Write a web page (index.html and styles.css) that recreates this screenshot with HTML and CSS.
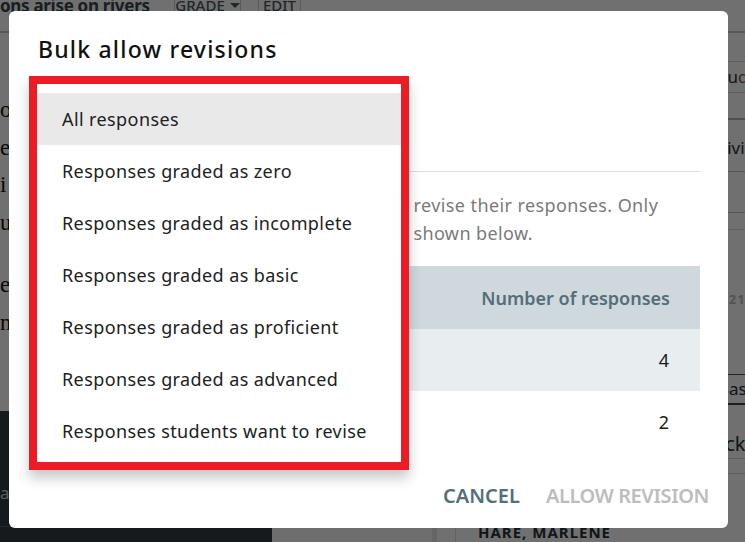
FILE: index.html
```html
<!DOCTYPE html>
<html>
<head>
<meta charset="utf-8">
<link rel="stylesheet" href="styles.css">
</head>
<body>
<div class="page">
  <header class="topbar">
    <div class="doc-title">ons arise on rivers</div>
    <div class="tb-btn grade">GRADE <span class="caret"></span></div>
    <div class="tb-btn edit">EDIT</div>
  </header>
  <div class="main">
    <section class="left">
      <div class="left-text">
        <div class="ln">o</div>
        <div class="ln">e</div>
        <div class="ln">i</div>
        <div class="ln">ur</div>
        <div class="ln gap">er</div>
        <div class="ln">nt</div>
      </div>
      <div class="left-dark">
        <div class="dark-text">as</div>
        <div class="dark-foot"></div>
      </div>
    </section>
    <section class="middle"></section>
    <section class="right">
      <div class="r-row r1"></div>
      <div class="r-row r2"><span class="r-txt">Stu<span class="acc">dents</span></span></div>
      <div class="r-row r3"></div>
      <div class="r-row r4"><span class="r-txt">Activity</span><div class="r-box"></div></div>
      <div class="r-row r5"><span class="r-num">5/21</span></div>
      <div class="r-row r6"><span class="r-txt">Basic</span></div>
      <div class="r-row r7"><span class="r-txt">Back</span></div>
      <div class="r-row r8"></div>
      <div class="r-row r9"><span class="student">HARE, MARLENE</span></div>
    </section>
  </div>
  <div class="overlay"></div>

  <div class="modal">
    <h2 class="modal-title">Bulk allow revisions</h2>
    <div class="field"></div>
    <p class="desc">
      <span class="line">Mark the responses you want students to&nbsp; revise their responses. Only</span>
      <span class="line">graded responses that may be revised are shown below.</span>
    </p>
    <table class="tbl">
      <thead>
        <tr><th class="c1">Response type</th><th class="c2">Number of responses</th></tr>
      </thead>
      <tbody>
        <tr class="alt"><td class="c1">All responses</td><td class="c2">4</td></tr>
        <tr><td class="c1">Responses graded as zero</td><td class="c2">2</td></tr>
      </tbody>
    </table>
    <div class="footer">
      <button class="btn cancel">CANCEL</button>
      <button class="btn allow">ALLOW REVISION</button>
    </div>

    <ul class="menu">
      <li class="item active">All responses</li>
      <li class="item">Responses graded as zero</li>
      <li class="item">Responses graded as incomplete</li>
      <li class="item">Responses graded as basic</li>
      <li class="item">Responses graded as proficient</li>
      <li class="item">Responses graded as advanced</li>
      <li class="item">Responses students want to revise</li>
    </ul>
  </div>
</div>
</body>
</html>
```

FILE: styles.css
```css
* { box-sizing: border-box; }
html, body { margin: 0; padding: 0; }
body { font-family: "Noto Sans", "Liberation Sans", sans-serif; background: #fff; }

.page {
  position: relative;
  width: 745px;
  height: 542px;
  overflow: hidden;
  background: #fff;
}

/* ---------- background page ---------- */
.topbar {
  display: flex;
  align-items: stretch;
  height: 54px;
  margin-top: -21px;
  border-bottom: 2px solid #c9c9c9;
}
.doc-title {
  width: 174px;
  flex-shrink: 0;
  overflow: hidden;
  display: flex;
  align-items: center;
  font-size: 17px;
  font-weight: 700;
  letter-spacing: -0.3px;
  color: #37474f;
  white-space: nowrap;
}
.tb-btn {
  flex-shrink: 0;
  display: flex;
  align-items: center;
  justify-content: center;
  gap: 5px;
  border-left: 1px solid #cfcfcf;
  border-right: 1px solid #cfcfcf;
  font-size: 15px;
  font-weight: 500;
  color: #455a64;
}
.grade { width: 67px; }
.edit { width: 43px; margin-left: 17px; }
.caret {
  width: 0; height: 0;
  border-left: 5px solid transparent;
  border-right: 5px solid transparent;
  border-top: 5px solid #455a64;
}

.main {
  display: flex;
  height: 509px;
}
.left {
  width: 272px;
  flex-shrink: 0;
  display: flex;
  flex-direction: column;
}
.left-text {
  flex: 1;
  padding-top: 58px;
  font-family: "Liberation Serif", serif;
  font-size: 23px;
  color: #111;
}
.ln { height: 37.5px; line-height: 37.5px; }
.ln.gap { margin-top: 25px; }
.left-dark {
  height: 131px;
  background: #313d44;
  display: flex;
  flex-direction: column;
}
.dark-text {
  flex: 1;
  padding-top: 70px;
  font-size: 17px;
  color: #cfd3d5;
}
.dark-foot { height: 16px; border-top: 1px solid #4d5a62; }

.middle {
  width: 165px;
  flex-shrink: 0;
  background: #fafafa;
  border-right: 5px solid #e6e6e6;
}
.right {
  flex: 1;
  min-width: 0;
  overflow: hidden;
  margin-left: 18px;
  border-left: 1px solid #e0e0e0;
  display: flex;
  flex-direction: column;
}
.r-row { display: flex; align-items: center; }
.r-txt { padding-left: 256px; font-size: 17px; color: #263238; white-space: nowrap; }
.acc { color: #8a5a1c; }
.r1 { height: 29px; border-bottom: 1px solid #d4d4d4; }
.r2 { height: 31px; border-bottom: 1px solid #d4d4d4; }
.r3 { height: 28px; border-bottom: 2px solid #b5b5b5; }
.r4 { height: 110px; flex-direction: column; align-items: flex-start; padding-top: 16px; border-bottom: 1px solid #dcdcdc; }
.r4 .r-txt { padding-left: 246px; }
.r-box { margin-left: 268px; margin-top: 12px; width: 30px; height: 42px; border: 1px solid #c4c4c4; }
.r5 { height: 146px; align-items: flex-start; padding-top: 60px; border-bottom: 1px solid #555; }
.r-num { padding-left: 258px; font-size: 13px; font-weight: 700; color: #bdbdbd; letter-spacing: 1px; white-space: nowrap; }
.r6 { height: 30px; border-bottom: 2px solid #444; }
.r6 .r-txt { padding-left: 262px; }
.r7 { height: 55px; align-items: flex-end; padding-bottom: 1px; border-bottom: 1px solid #d4d4d4; }
.r7 .r-txt { padding-left: 245px; font-size: 20px; }
.r8 { height: 15px; border-bottom: 1px solid #d4d4d4; }
.r9 { flex: 1; align-items: flex-start; padding-top: 48px; }
.student {
  padding-left: 22px;
  font-size: 15px;
  font-weight: 700;
  letter-spacing: 1px;
  color: #263238;
  white-space: nowrap;
}

.overlay {
  position: absolute;
  inset: 0;
  background: rgba(0, 0, 0, 0.56);
}

/* ---------- modal ---------- */
.modal {
  position: absolute;
  left: 9px;
  top: 11px;
  width: 719px;
  height: 517px;
  background: #fff;
  border-radius: 6px;
  padding: 24px 28px 0 29px;
  display: flex;
  flex-direction: column;
}
.modal-title {
  margin: 0;
  height: 28px;
  line-height: 28px;
  font-size: 23px;
  font-weight: 500;
  letter-spacing: 1.2px;
  color: #111;
}
.field {
  height: 109px;
  border-bottom: 1px solid #dedede;
}
.desc {
  margin: 19px 0 0;
  font-size: 18px;
  letter-spacing: 0.4px;
  line-height: 28px;
  color: #7a7a7a;
}
.desc .line { display: block; white-space: nowrap; }
.tbl {
  margin-top: 19px;
  width: 100%;
  border-collapse: collapse;
  font-size: 18px;
}
.tbl th {
  height: 63px;
  background: #cfd8dd;
  color: #546e7a;
  font-weight: 600;
  padding: 0 30px 0 24px;
}
.tbl td {
  height: 62px;
  padding: 0 31px 0 24px;
  color: #1a1a1a;
}
.tbl .c1 { text-align: left; }
.tbl .c2 { text-align: right; }
.tbl tr.alt td { background: #e8edf0; }

.footer {
  height: 75px;
  padding-top: 9px;
  margin-right: -19px;
  display: flex;
  align-items: center;
  justify-content: flex-end;
  gap: 6px;
}
.btn {
  border: 0;
  background: transparent;
  padding: 8px 10px;
  font-family: "Noto Sans", "Liberation Sans", sans-serif;
  font-size: 20px;
  font-weight: 600;
  letter-spacing: -0.4px;
}
.cancel { color: #546e7a; letter-spacing: 0; }
.allow { color: #bdbdbd; }

/* ---------- dropdown menu ---------- */
.menu {
  position: absolute;
  left: 20px;
  top: 65px;
  width: 380px;
  height: 394px;
  margin: 0;
  padding: 9px 0 5px;
  list-style: none;
  background: #fff;
  border: 8px solid #ed1c24;
  box-shadow: 0 8px 12px rgba(0, 0, 0, 0.22);
}
.item {
  height: 52px;
  display: flex;
  align-items: center;
  padding-left: 25px;
  font-size: 18px;
  letter-spacing: 0.4px;
  color: #212121;
}
.item.active { background: #e9e9e9; }
```
